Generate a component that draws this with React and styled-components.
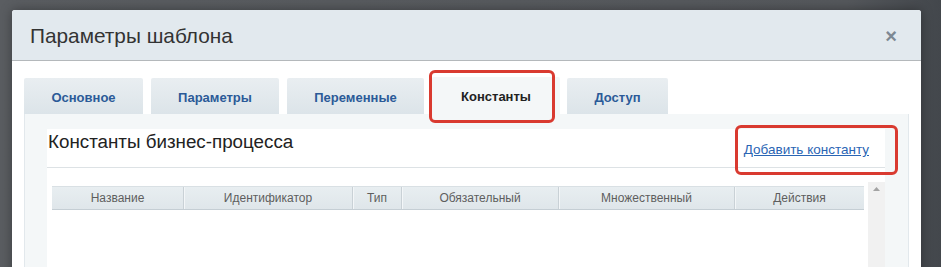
import React from 'react';
import styled, { createGlobalStyle } from 'styled-components';

// фон страницы #54575b, шапка #e2e9ee, панель вкладок #f4f7f8
// выделение красным #d93a30

const GlobalStyle = createGlobalStyle`
    html, body {
        margin: 0;
        padding: 0;
        width: 941px;
        height: 267px;
        overflow: hidden;
        background: #54575b;
        font-family: 'Liberation Sans', Arial, sans-serif;
    }
`

const Page = styled.div`
    position: relative;
    width: 941px;
    height: 267px;
    overflow: hidden;
    background: linear-gradient(90deg, #5a5d61 0%, #55585c 90%, #43474c 100%);
    padding: 10px 0 0 12px;
    box-sizing: border-box;
`

const Dialog = styled.div`
    width: 909px;
    height: 300px;
    background: #fff;
    border-radius: 3px 3px 0 0;
    box-shadow: 0 0 12px rgba(0,0,0,0.35);
    display: flex;
    flex-direction: column;
`

const Header = styled.div`
    height: 51px;
    flex: none;
    box-sizing: border-box;
    background: #e2e9ee;
    border-bottom: 1px solid #b4b8bb;
    border-radius: 3px 3px 0 0;
    display: flex;
    align-items: center;
    justify-content: space-between;
    padding: 0 24px 0 18px;
`

const Title = styled.h1`
    margin: 0;
    font-size: 20.8px;
    font-weight: 400;
    color: #333;
    padding-top: 1px;
`

const Close = styled.span`
    font-size: 20px;
    font-weight: 700;
    color: #7d8893;
    line-height: 1;
    margin-top: 2px;
`

const Body = styled.div`
    padding: 17px 12px 0 12px;
    flex: 1;
    display: flex;
    flex-direction: column;
`

const Tabs = styled.div`
    display: flex;
    gap: 8px;
    height: 36px;
    align-items: flex-end;
`

const Tab = styled.div`
    width: ${p => p.width}px;
    height: ${p => p.active ? 37 : 36}px;
    box-sizing: border-box;
    display: flex;
    align-items: center;
    justify-content: center;
    font-size: 13px;
    font-weight: 700;
    color: ${p => p.active ? '#222' : '#2b5a98'};
    background: ${p => p.active ? '#f4f7f8' : 'linear-gradient(#e9eef1, #dce4e9)'};
    border-radius: 2px 2px 0 0;
    margin-right: ${p => p.active ? -1 : 0}px;
    padding-top: 2px;
`

const Panel = styled.div`
    flex: 1;
    width: 885px;
    box-sizing: border-box;
    background: #f4f7f8;
    border: 1px solid #e2e8ec;
    border-top: none;
    padding: 15px 23px 0 22px;
    display: flex;
`

const Content = styled.div`
    flex: 1;
    background: #fff;
    display: flex;
    flex-direction: column;
`

const SectionHead = styled.div`
    height: 39px;
    box-sizing: border-box;
    border-bottom: 1px solid #dde2e5;
    display: flex;
    justify-content: space-between;
    padding: 0 16px 0 1px;
`

const SectionTitle = styled.h2`
    margin: 0;
    font-size: 18.8px;
    font-weight: 400;
    color: #222;
    line-height: 24px;
    margin-top: 1px;
`

const AddLink = styled.a`
    font-size: 13.5px;
    color: #2a65b4;
    text-decoration: underline;
    margin-top: 13px;
    line-height: 16px;
`

const TableArea = styled.div`
    flex: 1;
    display: flex;
`

const TableWrap = styled.div`
    flex: 1;
    padding: 18px 4px 0 5px;
`

const HeaderRow = styled.div`
    display: flex;
    height: 22px;
    background: linear-gradient(#e8eef1, #dfe6ea);
    border-top: 1px solid #d9e0e4;
    border-bottom: 1px solid #c5ced4;
`

const HeadCell = styled.div`
    width: ${p => p.width}px;
    box-sizing: border-box;
    display: flex;
    align-items: center;
    justify-content: center;
    font-size: 12px;
    color: #5e5e5e;
    border-left: ${p => p.first ? 'none' : '1px solid #c9d1d6'};
    box-shadow: ${p => p.first ? 'none' : 'inset 1px 0 0 #f3f6f8'};
`

const Scrollbar = styled.div`
    width: 17px;
    margin-top: 14px;
    background: #f1f1f1;
    display: flex;
    justify-content: center;
    padding-top: 5px;
    box-sizing: border-box;
`

const Highlight = styled.div`
    position: absolute;
    left: ${p => p.x}px;
    top: ${p => p.y}px;
    width: ${p => p.w}px;
    height: ${p => p.h}px;
    box-sizing: border-box;
    border: 3.5px solid #d93a30;
    border-radius: 6px;
    pointer-events: none;
`

const tabs = [
    { label: 'Основное', width: 119 },
    { label: 'Параметры', width: 128 },
    { label: 'Переменные', width: 137 },
    { label: 'Константы', width: 128, active: true },
    { label: 'Доступ', width: 101 },
];

const columns = [
    { label: 'Название', width: 131 },
    { label: 'Идентификатор', width: 169 },
    { label: 'Тип', width: 49 },
    { label: 'Обязательный', width: 157 },
    { label: 'Множественный', width: 176 },
    { label: 'Действия', width: 130 },
];

const App = () => (
    <Page>
        <GlobalStyle />
        <Dialog>
            <Header>
                <Title>Параметры шаблона</Title>
                <Close>×</Close>
            </Header>
            <Body>
                <Tabs>
                    {tabs.map(t => (
                        <Tab key={t.label} width={t.width} active={t.active}>{t.label}</Tab>
                    ))}
                </Tabs>
                <Panel>
                    <Content>
                        <SectionHead>
                            <SectionTitle>Константы бизнес-процесса</SectionTitle>
                            <AddLink href="#">Добавить константу</AddLink>
                        </SectionHead>
                        <TableArea>
                            <TableWrap>
                                <HeaderRow>
                                    {columns.map((c, i) => (
                                        <HeadCell key={c.label} width={c.width} first={i === 0}>{c.label}</HeadCell>
                                    ))}
                                </HeaderRow>
                            </TableWrap>
                            <Scrollbar>
                                <svg width="7" height="4" viewBox="0 0 7 4">
                                    <path d="M0 4 L3.5 0 L7 4 Z" fill="#a3a3a3" />
                                </svg>
                            </Scrollbar>
                        </TableArea>
                    </Content>
                </Panel>
            </Body>
        </Dialog>
        <Highlight x={429} y={70} w={126} h={53} />
        <Highlight x={735} y={125} w={163} h={50} />
    </Page>
);

export default App;
